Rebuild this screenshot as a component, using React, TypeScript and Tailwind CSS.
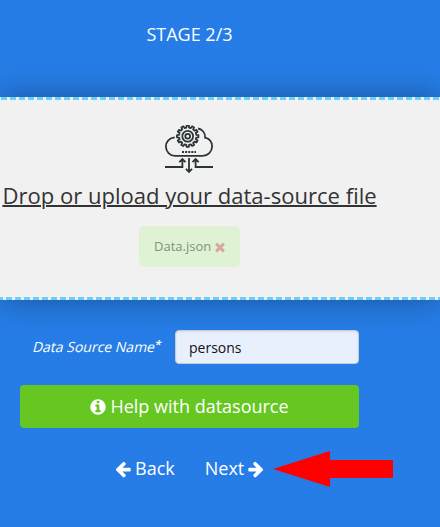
import React from "react";

const ARROW =
  "M1664 896v128q0 53-32.5 90.5t-84.5 37.5h-704l293 294q38 36 38 90t-38 90l-75 76q-37 37-90 37-52 0-91-37l-651-652q-37-37-37-90 0-52 37-91l651-650q38-38 91-38 52 0 90 38l75 74q38 38 38 91t-38 91l-293 293h704q52 0 84.5 37.5t32.5 90.5z";
const INFO =
  "M1152 1376v-160q0-14-9-23t-23-9h-96v-512q0-14-9-23t-23-9h-320q-14 0-23 9t-9 23v160q0 14 9 23t23 9h96v320h-96q-14 0-23 9t-9 23v160q0 14 9 23t23 9h448q14 0 23-9t9-23zm-128-896v-160q0-14-9-23t-23-9h-192q-14 0-23 9t-9 23v160q0 14 9 23t23 9h192q14 0 23-9t9-23zm640 416q0 209-103 385.5t-279.5 279.5-385.5 103-385.5-103-279.5-279.5-103-385.5 103-385.5 279.5-279.5 385.5-103 385.5 103 279.5 279.5 103 385.5z";
const TIMES =
  "M1490 1322q0 40-28 68l-136 136q-28 28-68 28t-68-28l-294-294-294 294q-28 28-68 28t-68-28l-136-136q-28-28-28-68t28-68l294-294-294-294q-28-28-28-68t28-68l136-136q28-28 68-28t68 28l294 294 294-294q28-28 68-28t68 28l136 136q28 28 28 68t-28 68l-294 294 294 294q28 28 28 68z";

function Glyph({ d, className }: { d: string; className: string }) {
  return (
    <svg viewBox="0 0 1792 1792" fill="currentColor" aria-hidden="true" className={className}>
      <path d={d} />
    </svg>
  );
}

function gearPath(cx: number, cy: number, outer: number, inner: number, teeth: number) {
  const step = (Math.PI * 2) / teeth;
  const points: string[] = [];
  for (let i = 0; i < teeth; i++) {
    const a = i * step - Math.PI / 2;
    [
      [inner, -0.3],
      [outer, -0.2],
      [outer, 0.2],
      [inner, 0.3],
    ].forEach(([r, f]) => {
      points.push(`${(cx + r * Math.cos(a + f * step)).toFixed(2)} ${(cy + r * Math.sin(a + f * step)).toFixed(2)}`);
    });
  }
  return `M${points.join("L")}Z`;
}

function CloudGear() {
  return (
    <svg width="48" height="50" viewBox="0 0 48 50" fill="none" stroke="#2d3436" strokeWidth="1.8" className="mr-px block shrink-0">
      <path d="M9.8 12.4C4.3 12.9.9 16.9.9 21.6c0 5 3.9 9.3 9.2 9.3h27.6c5.2 0 9.4-4.2 9.4-9.3 0-4.6-2.8-7.8-7-8.9.3-4.6-2.6-8.2-7-9.2" />
      <path strokeLinejoin="round" d={gearPath(22.7, 11.2, 10.8, 8.7, 12)} />
      <circle cx="22.7" cy="11.2" r="5.4" />
      <circle cx="22.7" cy="11.2" r="2.4" />
      <path strokeDasharray="2 1.1" strokeWidth="1.8" d="M17 27h14" />
      <path d="M0 42h17.4V34M14.3 37.2l3.1-3.1 3.1 3.1M48 42H30.6V34M27.5 37.2l3.1-3.1 3.1 3.1M24 33v14M20.9 43.8l3.1 3.1 3.1-3.1" />
    </svg>
  );
}

export default function App() {
  return (
    <main className="flex h-[527px] w-[440px] flex-col overflow-hidden bg-[#267de7] bg-[repeating-linear-gradient(135deg,#267de7_0px,#267de7_3px,#267ae2_4px,#267de7_5px)] font-['Open_Sans',sans-serif] text-white">
      <header className="flex h-[97px] shrink-0 justify-center pr-[61px] pt-[22px] text-[18px] leading-[25px]">
        STAGE 2/3
      </header>

      <section className="flex h-[203px] shrink-0 flex-col bg-[#f1f1f1] shadow-[0_0_30px_rgba(0,0,0,0.33)]">
        <div className="h-[3px] bg-[repeating-linear-gradient(90deg,#f1f1f1_0px,#f1f1f1_1px,#6bcff6_1px,#6bcff6_7px,#f1f1f1_7px,#f1f1f1_9px)]" />
        <div className="flex w-[379px] flex-1 flex-col items-center pt-[25px]">
          <CloudGear />
          <h1 className="mt-[4px] whitespace-nowrap text-[22.05px] leading-[32px] text-[#333] underline decoration-2">
            Drop or upload your data-source file
          </h1>
          <div className="mt-[15px] flex h-[41px] w-[101px] items-center rounded-[5px] bg-[#dff2d3] pl-[15px] text-[13px] text-[#858e80]">
            <span className="mt-px">Data.json</span>
            <Glyph d={TIMES} className="ml-[2px] size-[14px] text-[#d4a99b]" />
          </div>
        </div>
        <div className="h-[3px] bg-[repeating-linear-gradient(90deg,#6bcff6_0px,#6bcff6_3px,#f1f1f1_3px,#f1f1f1_6px,#6bcff6_6px,#6bcff6_9px)]" />
      </section>

      <form className="flex w-[359px] flex-col pl-5 pt-[30px]" onSubmit={(e) => e.preventDefault()}>
        <div className="flex h-[34px] items-center">
          <div className="w-[155px] shrink-0 pb-[2px] pl-[13px]">
            <label htmlFor="source" className="inline-block -skew-x-[14deg] whitespace-nowrap text-[14px] leading-5">
              Data Source Name<span className="relative -left-px -top-[3px] text-[12px] font-semibold">*</span>
            </label>
          </div>
          <input
            id="source"
            defaultValue="persons"
            className="h-[34px] w-[184px] rounded border border-[#c8cbd1] bg-[#e8effd] px-[13px] pt-px text-[14px] text-[#111] shadow-[inset_0_1px_2px_rgba(0,0,0,0.08)] outline-none"
          />
        </div>
        <button type="button" className="mt-[21px] flex h-[43px] items-center justify-center rounded bg-[#66c723] pr-px text-[18px]">
          <Glyph d={INFO} className="mr-[3px] size-[18px]" />
          Help with datasource
        </button>
      </form>

      <nav className="mt-[27px] flex h-[26px] items-center pl-[114px] text-[18px]">
        <a className="flex items-center">
          <Glyph d={ARROW} className="mr-[3px] mt-px size-[18px]" />
          Back
        </a>
        <a className="ml-[30px] flex items-center">
          Next
          <Glyph d={ARROW} className="ml-[3px] mt-px size-[18px] -scale-x-100" />
        </a>
        <svg width="120" height="36" viewBox="0 0 120 36" className="ml-[8px] mt-[2px] shrink-0" aria-hidden="true">
          <path fill="#f00" d="M0 18 57 0v9h63v18H57v9z" />
        </svg>
      </nav>
    </main>
  );
}
